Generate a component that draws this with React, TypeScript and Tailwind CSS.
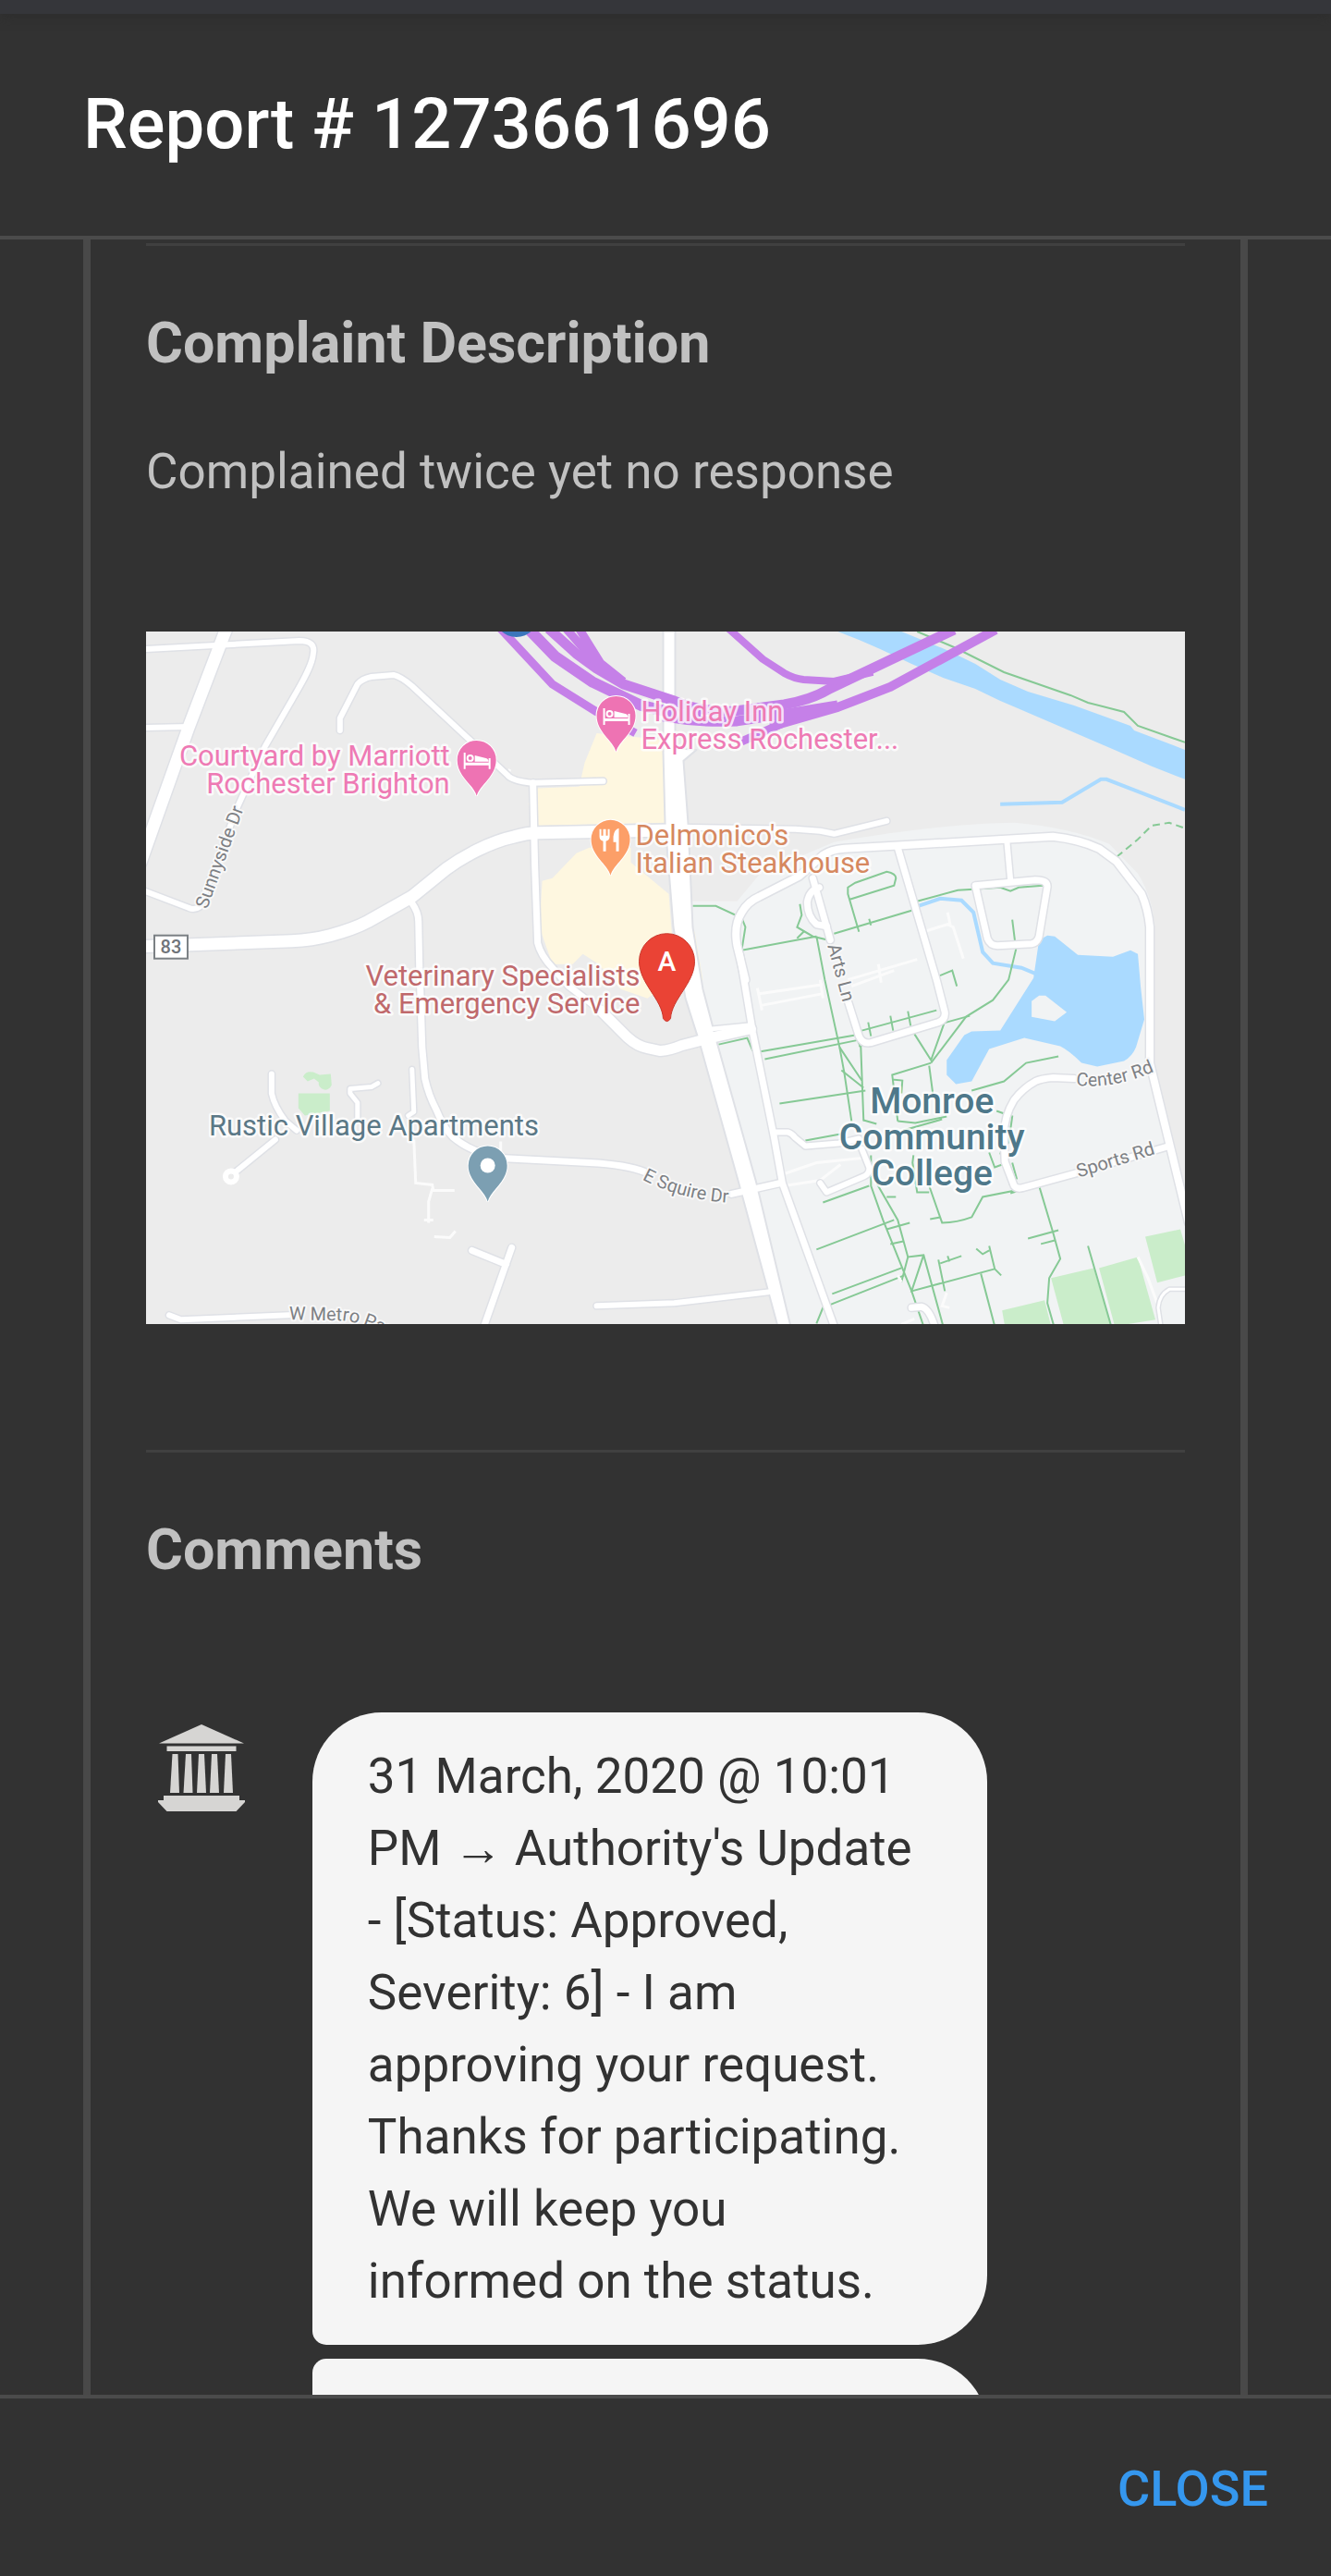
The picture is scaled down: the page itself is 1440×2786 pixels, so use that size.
import type { ReactNode } from "react";

type Pt = string;

/* Areas, roads and paths of the map, in the map's own 1125 x 750 units. */
const roads: { d: Pt; w: number }[] = [
  { d: "M88-6L46 104L-6 250", w: 13 },
  { d: "M0 19L166 10Q184 10 181 24C180 38 166 60 158 74L129 124L99 190L58 298Q52 302 46 299L-4 280", w: 6 },
  { d: "M0 104L47 103", w: 6 },
  { d: "M210 107V94L229 57Q234 51 244 49L268 47Q276 49 288 59L391 155Q396 162 418 164L495 162", w: 6 },
  { d: "M419 164L421 254L424 337Q427 350 440 364L458 384L492 410", w: 7 },
  { d: "M492 410L521 439Q532 449 543 451L557 454Q568 453 580 448L615 439L655 430", w: 11 },
  { d: "M605 431L655 426", w: 5 },
  { d: "M-4 341L158 335Q180 334 199 329Q225 322 240 314L288 287L325 257Q340 246 358 237Q380 226 399 222Q412 218 425 218L580 215", w: 13 },
  { d: "M580 212L703 214L730 216L745 219L802 205", w: 6 },
  { d: "M288 294Q295 304 295 314L296 364L297 387L299 450L302 484Q306 502 314 517Q322 537 332 547Q345 558 362 564L384 570L480 575Q520 577 540 585", w: 7 },
  { d: "M634 609L687 597", w: 7 },
  { d: "M649 377L640 340Q636 318 645 304Q652 292 664 287L707 265L733 242Q742 236 756 235L810 232L982 222Q1010 225 1032 235L1051 249L1078 284Q1085 300 1087 320V467L1129 640", w: 8 },
  { d: "M643 350L657 434L680 547L689 597L748 760", w: 7 },
  { d: "M814 234L856 377L865 412Q866 420 858 423L785 445Q776 447 772 438L760 400", w: 7 },
  { d: "M722 267L741 334", w: 7 },
  { d: "M729 277Q718 280 716 293Q716 308 726 317L737 319", w: 7 },
  { d: "M932 225L936 269", w: 6 },
  { d: "M898 275L963 269Q976 269 976 276L967 330Q965 337 959 338L922 340Q914 340 911 332Z", w: 7 },
  { d: "M682 542L695 542Q699 543 703 548L714 557L750 554L772 549", w: 6 },
  { d: "M775 560L783 580Q784 587 777 590L737 607L730 597", w: 6 },
  { d: "M1005 484L982 483Q970 484 963 487Q950 494 940 507Q929 525 929 545L930 574L940 600Q943 604 950 602L1005 587L1108 557", w: 7 },
  { d: "M488 730L572 727L674 715", w: 6 },
  { d: "M136 479V500Q139 514 151 530L163 540M140 550L97 585", w: 6 },
  { d: "M251 489L244 493L221 495V500L229 510V527M288 474L290 520L284 524", w: 5 },
  { d: "M353 670L390 685M396 667L366 752", w: 7 },
  { d: "M25 740L38 745L155 740", w: 6 },
  { d: "M829 732L840 731Q848 733 854 752", w: 7 },
  { d: "M1128 712L1108 712Q1097 718 1096 732L1099 752", w: 3 },
];

const lanes: Pt[] = [
  "M842 325L868 317L874 320L885 354M868 304L871 318",
  "M760 377L835 355M793 360L796 380M764 384L810 367",
  "M664 392L733 382M662 386L667 410M730 377L733 397M665 405L733 392",
  "M691 587L726 575L775 570M691 600L730 594L752 577",
  "M290 550L292 597L310 599L311 605L334 605M310 603L306 617V640M301 637H311",
  "M312 655L329 656L335 649M384 552V565M391 157L394 149",
  "M867 716L862 730L870 732M814 697L818 704",
  "M818 750L832 744M1096 730L1085 700L1074 677",
];

const highways: { d: Pt; w: number }[] = [
  { d: "M384-3L440 57L488 87L530 110", w: 9 },
  { d: "M414-3L443 27L484 55L536 80L600 95", w: 12 },
  { d: "M436-3L466 24L488 40L517 57L572 75Q602 88 638 86L691 79Q720 74 740 62L875-2", w: 11 },
  { d: "M455-3L484 30L505 46M469-3L492 34L517 54", w: 9 },
  { d: "M631-3L668 30L691 45Q702 51 712 52L745 54L787 44", w: 8 },
  { d: "M920-2L806 60L749 82L676 103", w: 10 },
  { d: "M560 92Q600 99 640 97L700 88L749 80", w: 11 },
  { d: "M645 119L688 100", w: 9 },
];

const footpaths: Pt[] = [
  "M835 0L875 17L929 44L1001 69L1020 77L1059 87L1074 102L1125 120",
  "M592 297H617L645 310L649 320L645 345L726 330",
  "M745 327L829 302M783 311L785 318",
  "M772 325L760 284V277L768 272L802 260Q812 262 812 267L810 275L762 290",
  "M708 295L710 307L705 320L722 330L739 334M705 332L712 325",
  "M835 292L879 280L896 279L925 277L936 281L945 277L971 275",
  "M833 290L856 374L873 367L878 384",
  "M938 312L942 344L934 377L917 399L888 417L850 467",
  "M726 330L735 377L751 450L756 477L764 530",
  "M756 397L768 437L774 450L777 530",
  "M664 455L768 437M670 463L772 442",
  "M620 447L651 440L657 454",
  "M772 449L863 424L892 416",
  "M775 432L856 410M782 423L785 438M806 416L809 432M825 411L828 427",
  "M831 434L850 464L865 422L867 410L856 367",
  "M751 450L775 486M753 475L777 494",
  "M850 467L808 480L814 530M848 470L852 500M808 485L819 486L818 500",
  "M988 460L953 467L929 487L894 497",
  "M686 511L779 497M714 551L752 544M777 529L791 533",
  "M814 530L833 532L867 525M820 540L862 528",
  "M921 519L938 525L934 554",
  "M733 618L783 600M785 567V600L798 637L829 714L843 755",
  "M791 597L814 637L825 677L842 675L864 755",
  "M726 669L810 637M802 647L827 640M806 663L820 660M802 612H812",
  "M743 717L818 689M726 749L733 732L745 727L821 697",
  "M842 675L829 714L919 690L913 665M919 690L926 697M899 668L906 674L913 670",
  "M904 695L919 752M858 680L865 714M860 684L883 676M868 676L870 682",
  "M825 677L818 704M849 636L860 634",
  "M848 600L862 640Q878 640 894 634L906 612L967 600L982 650L990 679L978 700L976 727L984 755",
  "M955 657L988 648M969 663L984 659M1020 665L1046 755",
  "M831 567L830 575L835 607H848M913 564L919 580L927 577",
  "M925 564L936 600M938 575L943 593M936 608L952 603",
];

function Label(props: {
  x: number;
  lines: string[];
  ys: number[];
  fill: string;
  anchor?: "start" | "middle" | "end";
  size?: number;
  weight?: number;
}) {
  const { x, lines, ys, fill, anchor = "start", size = 31, weight = 400 } = props;
  return (
    <g
      fill={fill}
      fontSize={size}
      fontWeight={weight}
      textAnchor={anchor}
      stroke="#ffffff"
      strokeOpacity={0.8}
      strokeWidth={5}
      strokeLinejoin="round"
      paintOrder="stroke"
    >
      {lines.map((line, i) => (
        <text key={line} x={x} y={ys[i]}>
          {line}
        </text>
      ))}
    </g>
  );
}

function Pin({ x, y, fill, children }: { x: number; y: number; fill: string; children: ReactNode }) {
  return (
    <g transform={`translate(${x} ${y})`}>
      <path
        d="M0 39C-3 27-21 18-21 0A21 21 0 0 1 21 0C21 18 3 27 0 39Z"
        fill={fill}
        stroke="#ffffff"
        strokeWidth={2}
        paintOrder="stroke"
      />
      {children}
    </g>
  );
}

function Bed() {
  return (
    <g fill="#ffffff">
      <path d="M-14-8H-12V3H13V-2H15V10H13V6H-12V10H-14Z" />
      <path d="M-2-5L10-2Q13-1 13 2H-2Z" />
      <circle cx={-7} cy={-2} r={3} fill="none" stroke="#ffffff" strokeWidth={2} />
    </g>
  );
}

function LocationMap() {
  return (
    <svg
      viewBox="0 0 1125 750"
      role="img"
      aria-label="Map of the reported location"
      className="block h-auto w-full bg-[#ececec]"
      fontFamily="Roboto, sans-serif"
    >
      <path d="M588 292H640L665 262L745 228Q860 208 940 207Q1000 212 1043 230L1074 262Q1091 290 1092 320V480L1125 620V750H698L661 597L603 387Z" fill="#f1f3f4" />
      <path d="M488 110L560 117L562 207L425 210L414 187L418 170L469 168L475 142Z" fill="#fef7e0" />
      <path d="M429 270L440 267L466 240L480 234H525V250L566 284L572 360L560 385L543 397L514 387L490 360L473 349L462 360L440 360L426 320Z" fill="#fef7e0" />
      <path d="M594 324L603 377L598 380L588 345Z" fill="#fef7e0" />
      <g fill="#caedca">
        <path d="M165 500H199V519L172 524L165 516Z" />
        <path d="M170 482Q173 475 181 477L188 480L200 479L201 491Q198 497 193 496Q186 494 187 488L182 484L175 487Z" />
        <path d="M1082 655L1120 647L1125 664V697L1095 705Z" />
        <path d="M1032 689L1074 677L1093 745L1049 752Z" />
        <path d="M980 700L1026 689L1045 752H994Z" />
        <path d="M927 735L973 724L980 752H930Z" />
      </g>
      <g fill="#aadaff">
        <path d="M749 0L772 9L795 19L829 35L863 50L898 62L925 75L1051 129L1089 146L1125 160V128L1070 107L1066 102L1005 80L955 65L925 52L898 35L867 20L818 0Z" />
        <path d="M961 375L967 334L976 329L984 330L1009 350L1047 352L1066 345L1074 349L1077 384L1081 420L1072 450Q1068 460 1059 465L1030 471L1013 467Q1000 454 990 449L951 440L913 452L894 487L877 490L867 480V464L886 437L894 433L925 432Z" />
      </g>
      <path d="M967 394H974L997 412L984 422L959 417V400Z" fill="#f1f3f4" />
      <g fill="none" stroke="#aadaff" strokeWidth={4}>
        <path d="M925 187L992 185L1034 160H1040L1125 193" />
        <path d="M837 297L860 289L883 291L896 304L906 347L917 359L948 364L967 372" />
      </g>
      <g fill="none" stroke="#86c995" strokeWidth={2}>
        {footpaths.map((d) => (
          <path key={d} d={d} />
        ))}
        <path d="M1051 244L1074 225L1089 210L1108 207L1125 213" strokeDasharray="8 5" />
      </g>
      <g fill="none" stroke="#fbfbfb" strokeWidth={3}>
        {lanes.map((d) => (
          <path key={d} d={d} />
        ))}
      </g>
      <g fill="none" strokeLinecap="round" strokeLinejoin="round">
        <g stroke="#dfe1e6">
          {roads.map((r) => (
            <path key={r.d} d={r.d} strokeWidth={r.w + 3} />
          ))}
        </g>
        <path
          d="M560-2V130L562 207L571 320L584 397L599 444L641 594L684 752H698L661 597L618 444L603 387L592 320L587 207L582 140L596 128L573 126V-2Z"
          fill="#ffffff"
          stroke="#dfe1e6"
          strokeWidth={2}
        />
        <g stroke="#ffffff">
          {roads.map((r) => (
            <path key={r.d} d={r.d} strokeWidth={r.w} />
          ))}
          <circle cx={92} cy={590} r={6} strokeWidth={6} />
        </g>
        <g stroke="#c580e8">
          {highways.map((h) => (
            <path key={h.d} d={h.d} strokeWidth={h.w} strokeLinecap="butt" />
          ))}
        </g>
      </g>
      <circle cx={401} cy={-18} r={24} fill="#3b76bb" />

      <rect x={9} y={329} width={36} height={25} fill="#ffffff" stroke="#7b8084" strokeWidth={2} />
      <text x={27} y={348} fontSize={20} fontWeight={500} textAnchor="middle" fill="#70757a">
        83
      </text>

      <defs>
        <path id="squire" d="M537 593Q582 617 642 619" />
        <path id="metro" d="M155 745L214 746Q232 748 262 762" />
        <path id="center" d="M1007 491Q1045 496 1090 477" />
      </defs>
      <g
        fill="#7d8084"
        fontSize={20}
        stroke="#f8f8f8"
        strokeWidth={4}
        strokeLinejoin="round"
        paintOrder="stroke"
      >
        <text transform="translate(66 301) rotate(-70)">Sunnyside Dr</text>
        <text transform="translate(738 340) rotate(75)">Arts Ln</text>
        <text transform="translate(1010 591) rotate(-17)">Sports Rd</text>
        <text>
          <textPath href="#squire">E Squire Dr</textPath>
        </text>
        <text>
          <textPath href="#metro">W Metro Park</textPath>
        </text>
        <text>
          <textPath href="#center">Center Rd</textPath>
        </text>
      </g>

      <Label x={329} ys={[145, 175]} lines={["Courtyard by Marriott", "Rochester Brighton"]} fill="#ee7ab4" anchor="end" />
      <Label x={536} ys={[97, 127]} lines={["Holiday Inn", "Express Rochester..."]} fill="#ee7ab4" />
      <Label x={530} ys={[231, 261]} lines={["Delmonico's", "Italian Steakhouse"]} fill="#d6885f" />
      <Label x={535} ys={[383, 413]} lines={["Veterinary Specialists", "& Emergency Service"]} fill="#c0696c" anchor="end" />
      <Label x={68} ys={[545]} lines={["Rustic Village Apartments"]} fill="#5b7886" />
      <Label
        x={851}
        ys={[521, 561, 600]}
        lines={["Monroe", "Community", "College"]}
        fill="#4e788a"
        anchor="middle"
        size={39}
        weight={500}
      />

      <Pin x={358} y={139} fill="#ee73b3">
        <Bed />
      </Pin>
      <Pin x={509} y={91} fill="#ee73b3">
        <Bed />
      </Pin>
      <Pin x={503} y={225} fill="#fc9f68">
        <g fill="#ffffff">
          <path d="M-12-11H-10V-4H-8V-11H-5V-4H-3V-11H-1V-3Q-1 1-5 2V13H-8V2Q-12 1-12-3Z" />
          <path d="M9-12V13H6V3H3V-3Q4-11 9-12Z" />
        </g>
      </Pin>
      <Pin x={370} y={578} fill="#7c9fb2">
        <circle r={8} fill="#ffffff" />
      </Pin>
      <g transform="translate(564 356)">
        <path
          d="M-4 63C-5 42-30 25-30 1A30 30 0 0 1 30 1C30 25 5 42 4 63Q0 69-4 63Z"
          fill="#ea4335"
          stroke="#c9372c"
          strokeWidth={1}
        />
        <text y={11} fontSize={30} fontWeight={500} textAnchor="middle" fill="#ffffff">
          A
        </text>
      </g>
    </svg>
  );
}

function AuthorityIcon() {
  return (
    <svg viewBox="0 0 94 94" role="img" aria-label="Authority" className="mt-[13px] ml-[13px] h-[94px] w-[94px]" fill="#d6d5d3">
      <path d="M47 0L93 20.500H1Z" />
      <path d="M9.500 23.500H84.500V29H9.500Z" />
      <path d="M15.500 32H21.500L23 74H13Z" />
      <path d="M30 32H36L37.500 74H27.500Z" />
      <path d="M44 32H50L52 74H42Z" />
      <path d="M58 32H64L66 74H56Z" />
      <path d="M73 32H79L81 74H71Z" />
      <path d="M6 77H88V82H94V84L84.500 94H9.500L0 84V82H6Z" />
    </svg>
  );
}

export default function App() {
  return (
    <div
      role="dialog"
      aria-labelledby="report-title"
      className="flex h-screen flex-col bg-[#323232] font-[Roboto,sans-serif] text-[#c1c1c1]"
    >
      <div className="h-[15px] shrink-0 bg-[#35363a] shadow-[0_0_16px_#2a2a2a]" />
      <header className="flex h-[244px] shrink-0 items-center border-b-4 border-[#4b4b4b] px-[90px] pb-0.5">
        <h1 id="report-title" className="text-[76px] leading-[120px] font-medium text-white">
          Report # 1273661696
        </h1>
      </header>

      <main className="min-h-0 flex-1 overflow-hidden px-[90px]">
        <div className="border-x-8 border-[#494949] px-[60px] pt-1">
          <hr className="border-t-3 border-[#404040]" />
          <section>
            <h2 className="mt-[65px] text-[61px] leading-[80px] font-bold">Complaint Description</h2>
            <p className="mt-[60px] text-[53px] leading-[78px]">Complained twice yet no response</p>
            <div className="mt-[134px]">
              <LocationMap />
            </div>
          </section>

          <hr className="mt-[136px] border-t-3 border-[#404040]" />
          <section>
            <h2 className="mt-[65px] text-[61px] leading-[80px] font-bold">Comments</h2>
            <div className="mt-[136px] flex">
              <div className="w-[16%] shrink-0">
                <AuthorityIcon />
              </div>
              <div className="flex w-[65%] flex-col gap-[15px] text-[#323232]">
                <p className="rounded-[75px] rounded-bl-[15px] bg-[#f5f5f5] px-[60px] py-[30px] text-[53px] leading-[78px]">
                  31 March, 2020 @ 10:01 PM → Authority's Update - [Status: Approved, Severity: 6] - I am approving
                  your request. Thanks for participating. We will keep you informed on the status.
                </p>
                <div className="h-[216px] rounded-[75px] rounded-l-[15px] bg-[#f5f5f5]" />
              </div>
            </div>
          </section>
        </div>
      </main>

      <footer className="flex h-[196px] shrink-0 items-center justify-end border-t-4 border-[#4b4b4b] px-[38px] pt-1">
        <button type="button" className="cursor-pointer px-[30px] text-[54px] leading-[90px] font-medium text-[#3597ee]">
          CLOSE
        </button>
      </footer>
    </div>
  );
}
